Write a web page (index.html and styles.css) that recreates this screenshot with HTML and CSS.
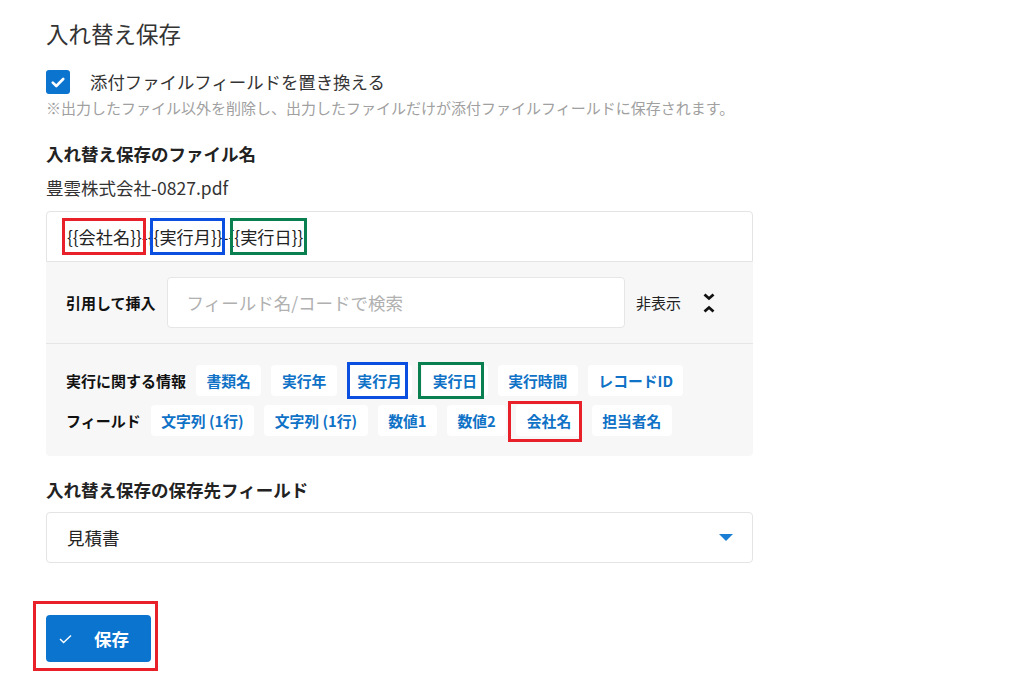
FILE: index.html
```html
<!DOCTYPE html>
<html lang="ja">
<head>
    <meta charset="UTF-8">
    <meta name="viewport" content="width=device-width, initial-scale=1.0">
    <title>入れ替え保存</title>
    <link rel="stylesheet" href="styles.css">
</head>
<body>

    <div class="settings">
        <h2 class="section-title">入れ替え保存</h2>

        <label class="check-row">
            <span class="checkbox">
                <svg width="14" height="11" viewBox="0 0 14 11"><path d="M1.8 5.6 L5.3 9 L12.2 2" fill="none" stroke="#fff" stroke-width="2.6" stroke-linecap="round" stroke-linejoin="round"/></svg>
            </span>
            <span class="check-label">添付ファイルフィールドを置き換える</span>
        </label>
        <p class="note">※出力したファイル以外を削除し、出力したファイルだけが添付ファイルフィールドに保存されます。</p>

        <h3 class="field-label">入れ替え保存のファイル名</h3>
        <p class="preview">豊雲株式会社-0827.pdf</p>

        <div class="name-input"><span class="token mark-red">{{会社名}}</span>-<span class="token mark-blue">{{実行月}}</span>-<span class="token mark-green">{{実行日}}</span></div>

        <div class="insert-panel">
            <div class="insert-search">
                <span class="panel-label">引用して挿入</span>
                <input type="text" class="search-field" placeholder="フィールド名/コードで検索">
                <span class="hide-text">非表示</span>
                <svg class="collapse-icon" width="14" height="20" viewBox="0 0 14 20">
                    <path d="M2.5 1.5 L7 5.5 L11.5 1.5" fill="none" stroke="#111" stroke-width="2.8"/>
                    <path d="M2.5 18.5 L7 14.5 L11.5 18.5" fill="none" stroke="#111" stroke-width="2.8"/>
                </svg>
            </div>
            <div class="insert-lists">
                <div class="chip-row">
                    <span class="panel-label">実行に関する情報</span>
                    <span class="chip">書類名</span>
                    <span class="chip">実行年</span>
                    <span class="chip mark-blue">実行月</span>
                    <span class="chip mark-green">実行日</span>
                    <span class="chip">実行時間</span>
                    <span class="chip">レコードID</span>
                </div>
                <div class="chip-row">
                    <span class="panel-label">フィールド</span>
                    <span class="chip">文字列 (1行)</span>
                    <span class="chip">文字列 (1行)</span>
                    <span class="chip">数値1</span>
                    <span class="chip">数値2</span>
                    <span class="chip mark-red">会社名</span>
                    <span class="chip">担当者名</span>
                </div>
            </div>
        </div>

        <h3 class="field-label dest-label">入れ替え保存の保存先フィールド</h3>
        <div class="select-box">
            <span>見積書</span>
            <svg width="14" height="7" viewBox="0 0 14 7"><path d="M0 0 H14 L7 7 Z" fill="#1a7fd4"/></svg>
        </div>

        <div class="save-area">
            <button class="save-button">
                <svg width="13" height="10" viewBox="0 0 13 10"><path d="M1 5 L4.6 8.6 L12 1.4" fill="none" stroke="#fff" stroke-width="1.4"/></svg>
                <span>保存</span>
            </button>
        </div>
    </div>

</body>
</html>
```

FILE: styles.css
```css
body {
    margin: 0;
    background-color: #fff;
    color: #333;
    font-family: "Noto Sans CJK JP", "Noto Sans", sans-serif;
}

.settings {
    width: 707px;
    padding: 18px 0 20px 46px;
}

.section-title {
    margin: 0;
    font-size: 22.5px;
    font-weight: normal;
    line-height: 30px;
}

.check-row {
    display: flex;
    align-items: center;
    margin-top: 22px;
    height: 24px;
}

.checkbox {
    width: 24px;
    height: 24px;
    border-radius: 3px;
    background-color: #0b74cf;
    display: flex;
    align-items: center;
    justify-content: center;
}

.check-label {
    margin-left: 20px;
    font-size: 17.4px;
    line-height: 24px;
}

.note {
    margin: 4px 0 0;
    font-size: 15px;
    line-height: 20px;
    color: #a0a0a0;
}

.field-label {
    margin: 24px 0 0;
    font-size: 17.5px;
    font-weight: bold;
    line-height: 24px;
    color: #222;
}

.preview {
    margin: 10px 0 0;
    font-size: 17.5px;
    line-height: 24px;
}

.name-input {
    margin-top: 11px;
    height: 51px;
    box-sizing: border-box;
    border: 1px solid #e4e4e4;
    border-radius: 4px 4px 0 0;
    padding: 0 20px;
    display: flex;
    align-items: center;
    font-size: 17.2px;
    color: #222;
}

/* annotation frames drawn over the marked items */
.token, .chip.mark-red, .chip.mark-blue, .chip.mark-green {
    position: relative;
}

.token::after, .chip.mark-red::after, .chip.mark-blue::after, .chip.mark-green::after {
    content: "";
    position: absolute;
    border-width: 3px;
    border-style: solid;
    pointer-events: none;
}

.mark-red::after {
    border-color: #e8202a;
}

.mark-blue::after {
    border-color: #0a4fe0;
}

.mark-green::after {
    border-color: #0a7f50;
}

.token.mark-red::after {
    top: -6px;
    bottom: -6px;
    left: -5px;
    right: -4px;
}

.token.mark-blue::after {
    top: -6px;
    bottom: -6px;
    left: 2px;
    right: -2px;
}

.token.mark-green::after {
    top: -6px;
    bottom: -6px;
    left: 1px;
    right: -4px;
}

.chip.mark-blue::after {
    top: -3px;
    bottom: -3px;
    left: 0;
    right: 4px;
}

.chip.mark-green::after {
    top: -3px;
    bottom: -3px;
    left: -4px;
    right: 4px;
}

.chip.mark-red::after {
    top: -4px;
    bottom: -6px;
    left: -8px;
    right: 0;
}

.insert-panel {
    background-color: #f7f7f7;
    border-radius: 0 0 4px 4px;
}

.insert-search {
    display: flex;
    align-items: center;
    padding: 15px 37px 15px 20px;
    border-bottom: 1px solid #e6e6e6;
}

.panel-label {
    font-size: 15px;
    font-weight: bold;
    color: #111;
}

.search-field {
    flex: 1;
    height: 51px;
    box-sizing: border-box;
    margin-left: 11px;
    border: 1px solid #e6e6e6;
    border-radius: 4px;
    padding: 0 19px;
    font-family: inherit;
    font-size: 17.5px;
    background-color: #fff;
}

.search-field::placeholder {
    color: #b0b0b0;
}

.hide-text {
    margin-left: 11px;
    font-size: 15px;
    color: #222;
}

.collapse-icon {
    margin-left: 21px;
}

.insert-lists {
    padding: 21px 20px 20px;
    display: flex;
    flex-direction: column;
    gap: 9px;
}

.chip-row {
    display: flex;
    align-items: center;
    gap: 10px;
}

.chip {
    height: 31px;
    padding: 0 10.5px;
    display: flex;
    align-items: center;
    background-color: #fff;
    border-radius: 4px;
    color: #0f72c6;
    font-size: 14.8px;
    font-weight: bold;
}

.dest-label {
    margin-top: 22px;
}

.select-box {
    margin-top: 10px;
    height: 51px;
    box-sizing: border-box;
    border: 1px solid #e4e4e4;
    border-radius: 4px;
    padding: 0 19px 0 20px;
    display: flex;
    align-items: center;
    justify-content: space-between;
    font-size: 17.5px;
    color: #222;
}

.save-area {
    display: flex;
    width: max-content;
    margin: 38px 0 0 -13px;
    padding: 11px 4px 6px 10px;
    border: 3px solid #e8202a;
}

.save-button {
    width: 105px;
    height: 47px;
    border: none;
    border-radius: 4px;
    background-color: #0b74cf;
    color: #fff;
    display: flex;
    align-items: center;
    padding: 0 0 0 13px;
    font-family: inherit;
    font-size: 17.5px;
    font-weight: bold;
    cursor: pointer;
}

.save-button span {
    margin-left: 22px;
}
```
